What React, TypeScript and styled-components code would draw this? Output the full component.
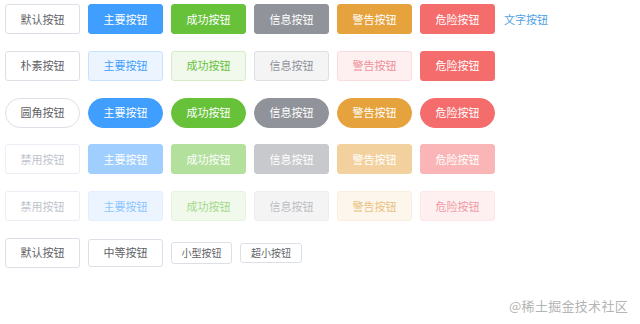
import React from "react";
import styled, { createGlobalStyle, css } from "styled-components";

type Kind = "default" | "primary" | "success" | "info" | "warning" | "danger";
type Size = "default" | "medium" | "small" | "mini";

const GlobalStyle = createGlobalStyle`
  html, body {
    margin: 0;
    padding: 0;
    background: #ffffff;
  }
  body {
    font-family: "Noto Sans CJK SC", "Noto Sans", "Liberation Sans", sans-serif;
  }
`;

// 실색 / plain / disabled 색상표
const solid: Record<Kind, { bg: string; border: string; color: string }> = {
  default: { bg: "#ffffff", border: "#dcdfe6", color: "#606266" },
  primary: { bg: "#409eff", border: "#409eff", color: "#ffffff" },
  success: { bg: "#67c23a", border: "#67c23a", color: "#ffffff" },
  info: { bg: "#909399", border: "#909399", color: "#ffffff" },
  warning: { bg: "#e6a23c", border: "#e6a23c", color: "#ffffff" },
  danger: { bg: "#f56c6c", border: "#f56c6c", color: "#ffffff" },
};

const plain: Record<Kind, { bg: string; border: string; color: string }> = {
  default: { bg: "#ffffff", border: "#dcdfe6", color: "#606266" },
  primary: { bg: "#ecf5ff", border: "#c6e2ff", color: "#409eff" },
  success: { bg: "#f0f9eb", border: "#d4edc6", color: "#67c23a" },
  info: { bg: "#f4f4f5", border: "#dedfe2", color: "#909399" },
  warning: { bg: "#fef0f1", border: "#f9dadd", color: "#ef8f98" },
  danger: { bg: "#fef0f0", border: "#fbc4c4", color: "#f56c6c" },
};

const solidDisabled: Record<Kind, { bg: string; border: string; color: string }> = {
  default: { bg: "#ffffff", border: "#ebeef5", color: "#c0c4cc" },
  primary: { bg: "#a0cfff", border: "#a0cfff", color: "#ffffff" },
  success: { bg: "#b3e19d", border: "#b3e19d", color: "#ffffff" },
  info: { bg: "#c8c9cc", border: "#c8c9cc", color: "#ffffff" },
  warning: { bg: "#f3d19e", border: "#f3d19e", color: "#ffffff" },
  danger: { bg: "#fab6b6", border: "#fab6b6", color: "#ffffff" },
};

const plainDisabled: Record<Kind, { bg: string; border: string; color: string }> = {
  default: { bg: "#ffffff", border: "#ebeef5", color: "#c0c4cc" },
  primary: { bg: "#ecf5ff", border: "#e2efff", color: "#8cc5ff" },
  success: { bg: "#f0f9eb", border: "#e6f4de", color: "#a4da89" },
  info: { bg: "#f4f4f5", border: "#ededef", color: "#bcbec2" },
  warning: { bg: "#fdf6ec", border: "#faefdf", color: "#e8c27e" },
  danger: { bg: "#fef0f0", border: "#fde6e6", color: "#f09aa5" },
};

const sizes: Record<Size, { w: number; h: number; font: number }> = {
  default: { w: 75, h: 30, font: 11 },
  medium: { w: 75, h: 28, font: 11 },
  small: { w: 61, h: 22, font: 10 },
  mini: { w: 62, h: 20, font: 10 },
};

const Page = styled.div`
  position: relative;
  width: 640px;
  height: 324px;
  box-sizing: border-box;
  padding: 4px 0 0 5px;
  display: flex;
  flex-direction: column;
  gap: 16.8px;
`;

const Row = styled.div`
  display: flex;
  align-items: center;
  gap: 8px;
  height: 30px;
`;

const Btn = styled.button<{
  $kind: Kind;
  $plain?: boolean;
  $round?: boolean;
  $disabled?: boolean;
  $size?: Size;
}>`
  ${({ $kind, $plain, $disabled, $size = "default", $round }) => {
    const table = $disabled
      ? $plain
        ? plainDisabled
        : solidDisabled
      : $plain
      ? plain
      : solid;
    const c = table[$kind];
    const s = sizes[$size];
    return css`
      width: ${s.w}px;
      height: ${s.h}px;
      font-size: ${s.font}px;
      background: ${c.bg};
      border: 1px solid ${c.border};
      color: ${c.color};
      border-radius: ${$round ? s.h / 2 : 3}px;
    `;
  }}
  box-sizing: border-box;
  padding: 0;
  margin: 0;
  font-family: inherit;
  line-height: 1;
  display: flex;
  align-items: center;
  justify-content: center;
  flex-shrink: 0;
  cursor: pointer;
`;

const TextBtn = styled.span`
  margin-left: 1px;
  font-size: 11px;
  color: #4f9fe6;
`;

const Watermark = styled.div`
  position: absolute;
  right: 12px;
  bottom: 9px;
  font-size: 13px;
  color: #b4b4b4;
  letter-spacing: 0.3px;
`;

const kinds: Kind[] = ["primary", "success", "info", "warning", "danger"];
const labels: Record<Kind, string> = {
  default: "默认按钮",
  primary: "主要按钮",
  success: "成功按钮",
  info: "信息按钮",
  warning: "警告按钮",
  danger: "危险按钮",
};

export default function App() {
  return (
    <>
      <GlobalStyle />
      <Page>
        <Row>
          <Btn $kind="default">默认按钮</Btn>
          {kinds.map((k) => (
            <Btn key={k} $kind={k}>
              {labels[k]}
            </Btn>
          ))}
          <TextBtn>文字按钮</TextBtn>
        </Row>

        <Row>
          <Btn $kind="default" $plain>
            朴素按钮
          </Btn>
          {kinds.map((k) => (
            <Btn key={k} $kind={k} $plain={k !== "danger"}>
              {labels[k]}
            </Btn>
          ))}
        </Row>

        <Row>
          <Btn $kind="default" $round>
            圆角按钮
          </Btn>
          {kinds.map((k) => (
            <Btn key={k} $kind={k} $round>
              {labels[k]}
            </Btn>
          ))}
        </Row>

        <Row>
          <Btn $kind="default" $disabled>
            禁用按钮
          </Btn>
          {kinds.map((k) => (
            <Btn key={k} $kind={k} $disabled>
              {labels[k]}
            </Btn>
          ))}
        </Row>

        <Row>
          <Btn $kind="default" $disabled $plain>
            禁用按钮
          </Btn>
          {kinds.map((k) => (
            <Btn key={k} $kind={k} $disabled $plain>
              {labels[k]}
            </Btn>
          ))}
        </Row>

        <Row>
          <Btn $kind="default">默认按钮</Btn>
          <Btn $kind="default" $size="medium">
            中等按钮
          </Btn>
          <Btn $kind="default" $size="small">
            小型按钮
          </Btn>
          <Btn $kind="default" $size="mini">
            超小按钮
          </Btn>
        </Row>

        <Watermark>@稀土掘金技术社区</Watermark>
      </Page>
    </>
  );
}
